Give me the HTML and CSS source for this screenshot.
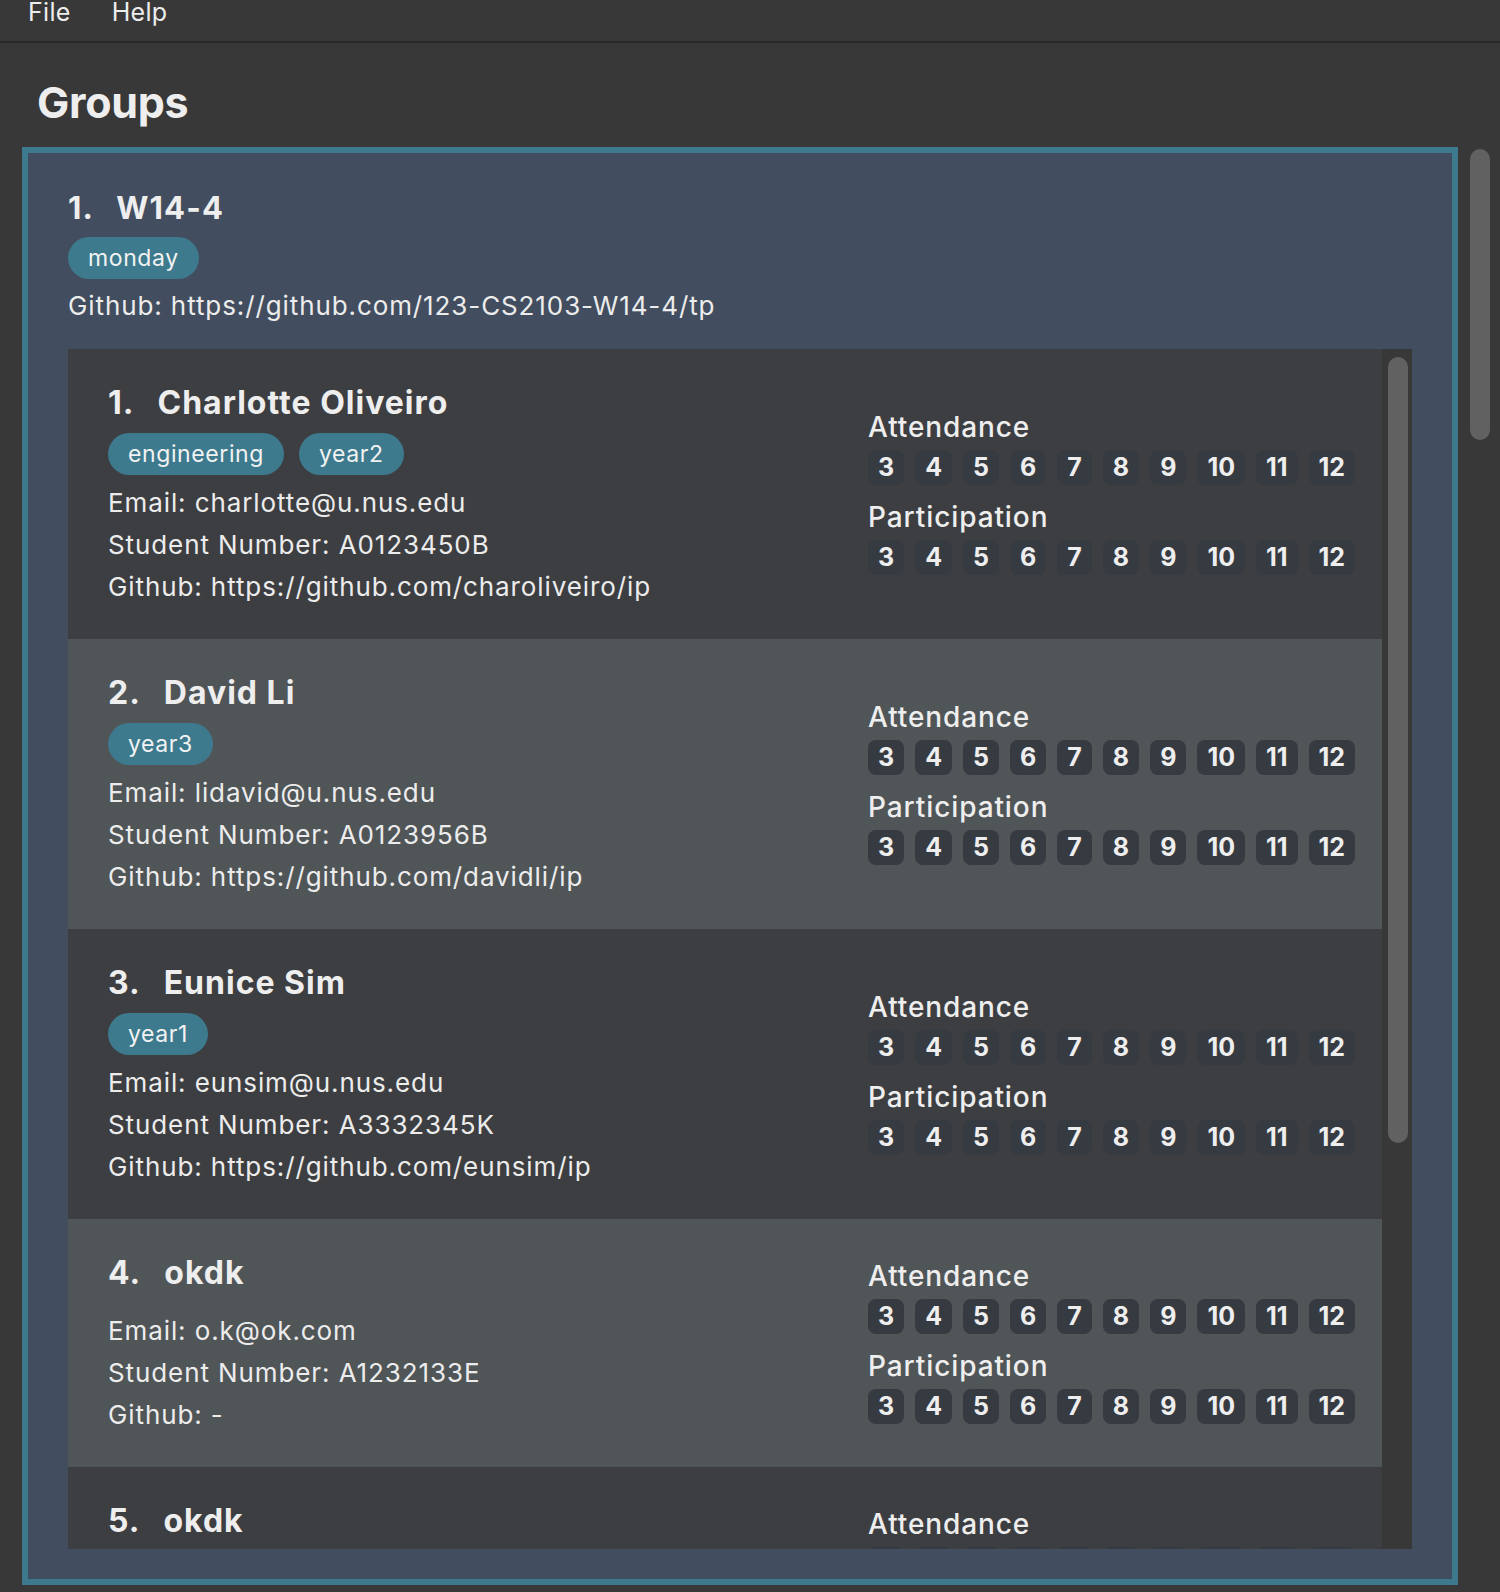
FILE: index.html
```html
<!DOCTYPE html>
<html>
<head>
<meta charset="utf-8">
<link rel="stylesheet" href="styles.css">
</head>
<body>
<div class="menubar"><span class="menu-item">File</span><span class="menu-item">Help</span></div>
<div class="page">
  <h1 class="page-title">Groups</h1>
  <div class="content">
    <div class="group-box">
      <div class="group-head">
        <div class="group-title"><span class="idx">1.</span>W14-4</div>
        <div class="tags"><span class="tag">monday</span></div>
        <div class="line">Github: https://github.com/123-CS2103-W14-4/tp</div>
      </div>
      <div class="list">
        <div class="cards">
          <div class="card dark">
            <div class="info">
              <div class="name"><span class="idx">1.</span>Charlotte Oliveiro</div>
              <div class="tags"><span class="tag">engineering</span><span class="tag">year2</span></div>
              <div class="line">Email: charlotte@u.nus.edu</div>
              <div class="line">Student Number: A0123450B</div>
              <div class="line">Github: https://github.com/charoliveiro/ip</div>
            </div>
            <div class="stats">
              <div class="stat-label">Attendance</div>
              <div class="weeks"><span class="wk">3</span><span class="wk">4</span><span class="wk">5</span><span class="wk">6</span><span class="wk">7</span><span class="wk">8</span><span class="wk">9</span><span class="wk">10</span><span class="wk">11</span><span class="wk">12</span></div>
              <div class="stat-label">Participation</div>
              <div class="weeks"><span class="wk">3</span><span class="wk">4</span><span class="wk">5</span><span class="wk">6</span><span class="wk">7</span><span class="wk">8</span><span class="wk">9</span><span class="wk">10</span><span class="wk">11</span><span class="wk">12</span></div>
            </div>
          </div>
          <div class="card light">
            <div class="info">
              <div class="name"><span class="idx">2.</span>David Li</div>
              <div class="tags"><span class="tag">year3</span></div>
              <div class="line">Email: lidavid@u.nus.edu</div>
              <div class="line">Student Number: A0123956B</div>
              <div class="line">Github: https://github.com/davidli/ip</div>
            </div>
            <div class="stats">
              <div class="stat-label">Attendance</div>
              <div class="weeks"><span class="wk">3</span><span class="wk">4</span><span class="wk">5</span><span class="wk">6</span><span class="wk">7</span><span class="wk">8</span><span class="wk">9</span><span class="wk">10</span><span class="wk">11</span><span class="wk">12</span></div>
              <div class="stat-label">Participation</div>
              <div class="weeks"><span class="wk">3</span><span class="wk">4</span><span class="wk">5</span><span class="wk">6</span><span class="wk">7</span><span class="wk">8</span><span class="wk">9</span><span class="wk">10</span><span class="wk">11</span><span class="wk">12</span></div>
            </div>
          </div>
          <div class="card dark">
            <div class="info">
              <div class="name"><span class="idx">3.</span>Eunice Sim</div>
              <div class="tags"><span class="tag">year1</span></div>
              <div class="line">Email: eunsim@u.nus.edu</div>
              <div class="line">Student Number: A3332345K</div>
              <div class="line">Github: https://github.com/eunsim/ip</div>
            </div>
            <div class="stats">
              <div class="stat-label">Attendance</div>
              <div class="weeks"><span class="wk">3</span><span class="wk">4</span><span class="wk">5</span><span class="wk">6</span><span class="wk">7</span><span class="wk">8</span><span class="wk">9</span><span class="wk">10</span><span class="wk">11</span><span class="wk">12</span></div>
              <div class="stat-label">Participation</div>
              <div class="weeks"><span class="wk">3</span><span class="wk">4</span><span class="wk">5</span><span class="wk">6</span><span class="wk">7</span><span class="wk">8</span><span class="wk">9</span><span class="wk">10</span><span class="wk">11</span><span class="wk">12</span></div>
            </div>
          </div>
          <div class="card light">
            <div class="info">
              <div class="name"><span class="idx">4.</span>okdk</div>
              <div class="tags"></div>
              <div class="line">Email: o.k@ok.com</div>
              <div class="line">Student Number: A1232133E</div>
              <div class="line">Github: -</div>
            </div>
            <div class="stats">
              <div class="stat-label">Attendance</div>
              <div class="weeks"><span class="wk">3</span><span class="wk">4</span><span class="wk">5</span><span class="wk">6</span><span class="wk">7</span><span class="wk">8</span><span class="wk">9</span><span class="wk">10</span><span class="wk">11</span><span class="wk">12</span></div>
              <div class="stat-label">Participation</div>
              <div class="weeks"><span class="wk">3</span><span class="wk">4</span><span class="wk">5</span><span class="wk">6</span><span class="wk">7</span><span class="wk">8</span><span class="wk">9</span><span class="wk">10</span><span class="wk">11</span><span class="wk">12</span></div>
            </div>
          </div>
          <div class="card dark">
            <div class="info">
              <div class="name"><span class="idx">5.</span>okdk</div>
              <div class="tags"></div>
              <div class="line">Email: o.k@ok.com</div>
              <div class="line">Student Number: A1232133E</div>
              <div class="line">Github: -</div>
            </div>
            <div class="stats">
              <div class="stat-label">Attendance</div>
              <div class="weeks"><span class="wk">3</span><span class="wk">4</span><span class="wk">5</span><span class="wk">6</span><span class="wk">7</span><span class="wk">8</span><span class="wk">9</span><span class="wk">10</span><span class="wk">11</span><span class="wk">12</span></div>
              <div class="stat-label">Participation</div>
              <div class="weeks"><span class="wk">3</span><span class="wk">4</span><span class="wk">5</span><span class="wk">6</span><span class="wk">7</span><span class="wk">8</span><span class="wk">9</span><span class="wk">10</span><span class="wk">11</span><span class="wk">12</span></div>
            </div>
          </div>
        </div>
        <div class="track"><div class="thumb inner-thumb"></div></div>
      </div>
    </div>
    <div class="page-scroll"><div class="thumb page-thumb"></div></div>
  </div>
</div>
</body>
</html>
```

FILE: styles.css
```css
* { box-sizing: border-box; }
html, body { margin: 0; padding: 0; }
body {
  background: #383838;
  color: #eeeeee;
  font-family: Inter, "Noto Sans", sans-serif;
  width: 1500px;
  height: 1592px;
  overflow: hidden;
}
.menubar {
  height: 43px;
  border-bottom: 2px solid #282828;
  display: flex;
  gap: 41px;
  padding-left: 28px;
  overflow: hidden;
}
.menu-item {
  font-size: 25px;
  line-height: 28px;
  margin-top: -2px;
  color: #ededed;
  letter-spacing: 0.3px;
}
.page { padding: 0 0 0 22px; }
.page-title {
  margin: 33px 0 19px 15px;
  font-size: 43px;
  line-height: 52px;
  font-weight: 700;
  color: #eeeeee;
  letter-spacing: -0.3px;
}
.content { display: flex; align-items: flex-start; }
.group-box {
  width: 1436px;
  height: 1438px;
  border: 6px solid #3e7a8e;
  background: #424e5f;
  padding: 35px 40px 30px 40px;
}
.group-title {
  font-size: 31px;
  line-height: 40px;
  font-weight: 700;
  margin-bottom: 9px;
  letter-spacing: 1.2px;
}
.group-title .idx { margin-right: 22px; }
.idx { display: inline-block; margin-right: 23px; }
.tags { display: flex; gap: 15px; }
.tag {
  height: 42px;
  line-height: 42px;
  padding: 0 20px;
  border-radius: 21px;
  background: #3e7a8e;
  font-size: 23px;
  color: #f2f2f2;
  letter-spacing: 0.6px;
}
.group-head .tags { margin-bottom: 6px; }
.line {
  font-size: 26px;
  line-height: 42px;
  color: #ececec;
  white-space: nowrap;
  letter-spacing: 0.9px;
}
.group-head { margin-bottom: 22px; }
.list {
  height: 1200px;
  display: flex;
  overflow: hidden;
}
.cards { width: 1314px; }
.track {
  width: 30px;
  background: #383838;
  padding: 8px 0 0 6px;
}
.thumb { background: #616161; border-radius: 10px; width: 20px; }
.inner-thumb { height: 786px; }
.card {
  display: flex;
  align-items: center;
  padding: 34px 30px 31px 40px;
}
.card.dark { background: #3d3e41; }
.card.light { background: #505558; }
.info { flex: 1; }
.name {
  font-size: 32px;
  line-height: 40px;
  font-weight: 700;
  margin-bottom: 10px;
  letter-spacing: 1px;
}
.info .tags { margin-bottom: 7px; }
.stats { width: 484px; margin-bottom: 6px; }
.stat-label {
  font-size: 28px;
  line-height: 34px;
  font-weight: 500;
  letter-spacing: 0.9px;
}
.weeks { display: flex; gap: 11px; margin-top: 6px; margin-bottom: 15px; }
.weeks:last-child { margin-bottom: 0; margin-top: 6px; }
.wk {
  height: 35px;
  line-height: 35px;
  padding: 0 10px;
  border-radius: 8px;
  background: #363a41;
  font-size: 25px;
  font-weight: 700;
}
.page-scroll { margin-left: 12px; padding-top: 2px; }
.page-thumb { height: 291px; }
```
